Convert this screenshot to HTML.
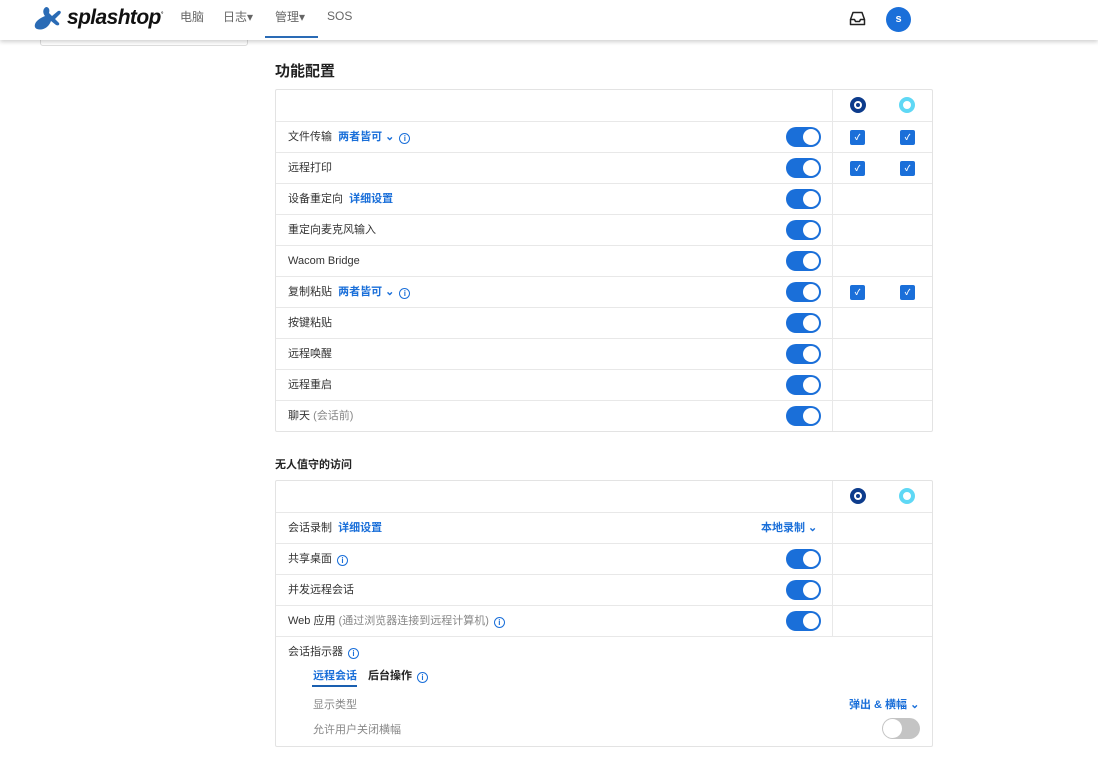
<!DOCTYPE html>
<html><head><meta charset="utf-8"><style>
*{box-sizing:border-box;margin:0;padding:0}
body{width:1098px;height:763px;background:#fff;font-family:"Liberation Sans","Noto Sans CJK SC",sans-serif;font-size:11px;color:#333;position:relative;overflow:hidden}
.nav{position:absolute;left:0;top:0;width:1098px;height:40px;background:#fff;box-shadow:0 2px 4px rgba(0,0,0,.18);z-index:2}
.nav .it{position:absolute;top:9px;font-size:12px;color:#666;line-height:17px}
.panel{position:absolute;left:40px;top:30px;width:208px;height:16px;border:1px solid #ddd;border-radius:3px}
h2{position:absolute;left:275px;top:60px;font-size:15px;font-weight:bold;color:#222}
h3{position:absolute;left:275px;top:456px;font-size:11px;font-weight:bold;color:#222}
.tbl{position:absolute;left:275px;width:658px;border:1px solid #e3e3e3;border-radius:2px}
.row{position:absolute;left:0;width:656px;border-top:1px solid #e8e8e8;height:31px}
.row .l{position:absolute;left:12px;top:7px;white-space:nowrap;line-height:16px}
.vd{position:absolute;left:556px;width:1px;background:#e8e8e8}
.tg{position:absolute;left:510px;top:5px;width:35px;height:20px;border-radius:10px;background:#1a6fd9}
.tg:after{content:"";position:absolute;right:2px;top:2px;width:16px;height:16px;border-radius:50%;background:#fff}
.cb{position:absolute;top:8px;width:15px;height:15px;background:#1a6fd9;border-radius:2px;color:#fff;font-size:8px;font-weight:bold;text-align:center;line-height:15px}
.b{color:#1a6fd9;font-weight:bold}
.g{color:#888}
.i{display:inline-block;width:11px;height:11px;border:1.3px solid #1a6fd9;border-radius:50%;color:#1a6fd9;font-size:8px;line-height:9px;text-align:center;font-weight:bold;vertical-align:-1px;margin-left:5px}
.ic1{position:absolute;top:7px;width:16px;height:16px;border-radius:50%;border:4px solid #0d3c8c;background:#fff}
.ic1:after{content:"";position:absolute;left:2px;top:2px;width:4px;height:4px;border-radius:50%;background:#0d3c8c}
.ic2{position:absolute;top:7px;width:16px;height:16px;border-radius:50%;border:4px solid #5fd8f5;background:#fff}
</style></head><body>
<div class="panel"></div>
<div class="nav">
<svg style="position:absolute;left:34px;top:5px" width="30" height="28" viewBox="0 0 30 28"><path d="M12 2c3 0 4 3 3 6l3 3 6-5c2-1 4 1 2 3l-5 5 4 4c1 2-1 3-3 2l-5-4c-2 6-8 10-14 8-3-1-3-5 0-8 3-3 6-4 8-5-2-2-3-7 1-9z" fill="#2a6bb5"/></svg>
<div style="position:absolute;left:67px;top:6px;font-size:21px;font-weight:bold;font-style:italic;color:#111;letter-spacing:-.6px">splashtop<sup style="font-size:6px">°</sup></div>
<div class="it" style="left:180px">电脑</div>
<div class="it" style="left:223px">日志▾</div>
<div class="it" style="left:275px">管理▾</div>
<div style="position:absolute;left:265px;top:36px;width:53px;height:2px;background:#2a6bb5"></div>
<div class="it" style="left:327px;top:8px">SOS</div>
<svg style="position:absolute;left:849px;top:11px" width="17" height="15" viewBox="0 0 17 15"><path d="M1.5 8.5L4 1.5h9l2.5 7v5h-14z M1.5 8.5h4l1 2h4l1-2h4" fill="none" stroke="#222" stroke-width="1.5" stroke-linejoin="round"/></svg>
<div style="position:absolute;left:886px;top:7px;width:25px;height:25px;border-radius:50%;background:#1a6fd9;color:#fff;font-size:11px;font-weight:bold;text-align:center;line-height:25px">s</div>
</div>
<h2>功能配置</h2>
<div class="tbl" style="top:89px;height:343px">
<div class="vd" style="top:0;height:341px"></div>
<div class="ic1" style="left:574px"></div><div class="ic2" style="left:623px"></div>
<div class="row" style="top:31px"><span class="l">文件传输 &nbsp;<span class="b">两者皆可 ⌄</span><span class="i">i</span></span><div class="tg"></div><div class="cb" style="left:574px">✓</div><div class="cb" style="left:624px">✓</div></div>
<div class="row" style="top:62px"><span class="l">远程打印</span><div class="tg"></div><div class="cb" style="left:574px">✓</div><div class="cb" style="left:624px">✓</div></div>
<div class="row" style="top:93px"><span class="l">设备重定向 &nbsp;<span class="b">详细设置</span></span><div class="tg"></div></div>
<div class="row" style="top:124px"><span class="l">重定向麦克风输入</span><div class="tg"></div></div>
<div class="row" style="top:155px"><span class="l">Wacom Bridge</span><div class="tg"></div></div>
<div class="row" style="top:186px"><span class="l">复制粘贴 &nbsp;<span class="b">两者皆可 ⌄</span><span class="i">i</span></span><div class="tg"></div><div class="cb" style="left:574px">✓</div><div class="cb" style="left:624px">✓</div></div>
<div class="row" style="top:217px"><span class="l">按键粘贴</span><div class="tg"></div></div>
<div class="row" style="top:248px"><span class="l">远程唤醒</span><div class="tg"></div></div>
<div class="row" style="top:279px"><span class="l">远程重启</span><div class="tg"></div></div>
<div class="row" style="top:310px"><span class="l">聊天 <span class="g">(会话前)</span></span><div class="tg"></div></div>
</div>
<h3>无人值守的访问</h3>
<div class="tbl" style="top:480px;height:267px">
<div class="vd" style="top:0;height:155px"></div>
<div class="ic1" style="left:574px"></div><div class="ic2" style="left:623px"></div>
<div class="row" style="top:31px"><span class="l">会话录制 &nbsp;<span class="b">详细设置</span></span><span class="b" style="position:absolute;left:485px;top:7px;line-height:16px">本地录制 ⌄</span></div>
<div class="row" style="top:62px"><span class="l">共享桌面<span class="i">i</span></span><div class="tg"></div></div>
<div class="row" style="top:93px"><span class="l">并发远程会话</span><div class="tg"></div></div>
<div class="row" style="top:124px"><span class="l">Web 应用 <span class="g">(通过浏览器连接到远程计算机)</span><span class="i">i</span></span><div class="tg"></div></div>
<div class="row" style="top:155px;height:110px">
<span class="l">会话指示器<span class="i">i</span></span>
<span class="b" style="position:absolute;left:37px;top:30px">远程会话</span>
<div style="position:absolute;left:36px;top:48px;width:45px;height:2px;background:#1a5fb0"></div>
<span style="position:absolute;left:92px;top:30px;font-weight:bold;color:#222">后台操作<span class="i">i</span></span>
<span class="g" style="position:absolute;left:37px;top:59px">显示类型</span>
<span class="b" style="position:absolute;left:573px;top:59px">弹出 &amp; 横幅 ⌄</span>
<span class="g" style="position:absolute;left:37px;top:84px">允许用户关闭横幅</span>
<div style="position:absolute;left:606px;top:81px;width:38px;height:21px;border-radius:11px;background:#c4c4c4"><div style="position:absolute;left:1px;top:1px;width:19px;height:19px;border-radius:50%;background:#fff"></div></div>
</div>
</div>
</body></html>
